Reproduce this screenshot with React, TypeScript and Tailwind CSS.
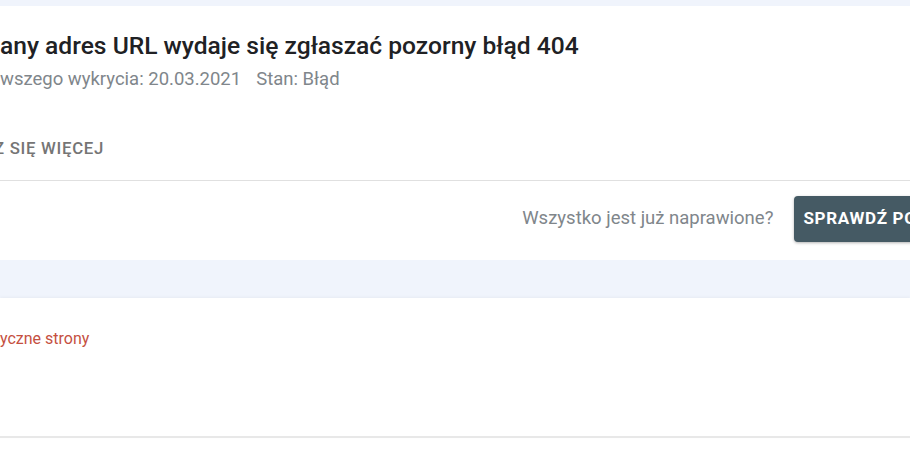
import React from 'react';

// Prefix hidden past the left edge of the crop, drawn just before the visible part.
const Clipped: React.FC<{ hidden: string; shown: string }> = ({ hidden, shown }) => (
  <span className="relative inline-block whitespace-nowrap">
    <span className="absolute right-full top-0">{hidden}</span>
    {shown}
  </span>
);

export default function App() {
  return (
    <div
      className="w-[910px] h-[469px] overflow-hidden bg-white"
      style={{ fontFamily: 'Roboto, "Noto Sans", Arial, sans-serif' }}
    >
      <div className="h-[6px] bg-[#f0f4fc]" />

      {/* Issue card */}
      <div className="bg-white">
        <div className="pt-[26px]">
          <h1 className="text-[24.6px] leading-[28px] font-medium text-[#202124]">
            <Clipped hidden="Przesł" shown="any adres URL wydaje się zgłaszać pozorny błąd 404" />
          </h1>
          <div className="mt-[8px] text-[18.5px] leading-[22px] text-[#80868b] whitespace-nowrap">
            <Clipped hidden="Data pier" shown="wszego wykrycia: 20.03.2021" />
            <span className="ml-[15px]">Stan: Błąd</span>
          </div>
          <div className="mt-[48px] text-[16.8px] leading-[20px] font-medium tracking-[0.7px] text-[#757575] -ml-[6px]">
            <Clipped hidden="DOWIED" shown="Z SIĘ WIĘCEJ" />
          </div>
        </div>

        <div className="mt-[22px] border-t border-[#e0e0e0]" />

        <div className="flex items-center justify-end gap-[21px] h-[79px] pb-[3px]">
          <span className="text-[18.5px] text-[#80868b] whitespace-nowrap">Wszystko jest już naprawione?</span>
          <button className="h-[46px] px-[9px] -mr-[88px] rounded-[4px] bg-[#455a64] text-white text-[17px] font-bold tracking-[0.7px] whitespace-nowrap shadow-[0_1px_3px_rgba(0,0,0,0.3)]">
            SPRAWDŹ POPRAWKĘ
          </button>
        </div>
      </div>

      <div className="h-[38px] bg-[#f0f4fc]" />

      {/* Next section */}
      <div className="bg-white shadow-[0_-1px_3px_rgba(0,0,0,0.04)]">
        <div className="pt-[31px] h-[138px] text-[16px] leading-[20px] text-[#c5503f]">
          <Clipped hidden="Kryt" shown="yczne strony" />
        </div>
        <div className="border-t-2 border-[#e8e8e8]" />
      </div>
    </div>
  );
}
